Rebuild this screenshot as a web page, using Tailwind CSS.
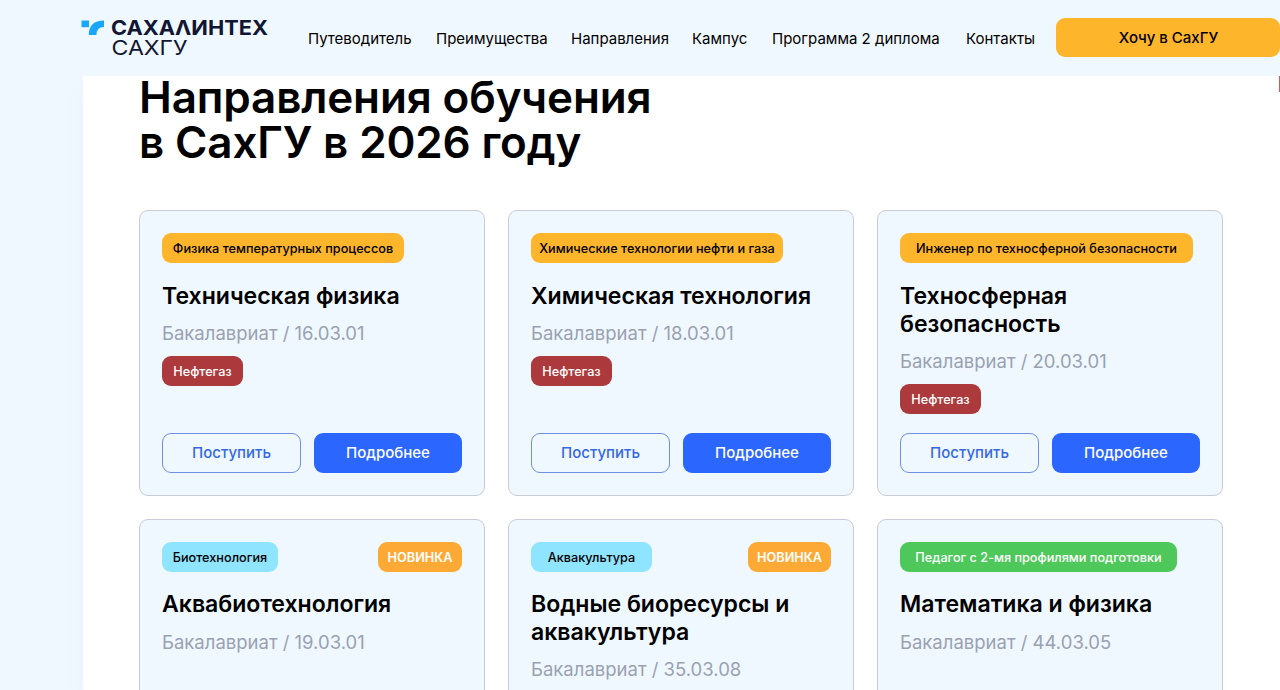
<!DOCTYPE html>
<html lang="ru">
<head>
<meta charset="utf-8">
<title>Сахалинтех СахГУ</title>
<script src="https://cdn.jsdelivr.net/npm/@tailwindcss/browser@4"></script>
</head>
<body class="relative h-[690px] overflow-hidden bg-[#f0f8ff] font-['Inter',sans-serif] text-black">
<header class="relative z-10 flex h-[76px] w-[1280px] bg-[#f0f8ff]">
  <a class="ml-[81px] mt-[16px] block w-[228px] shrink-0">
    <svg width="190" height="44" viewBox="0 -2 190 44">
      <path d="M.5 2.500h7.500v6.700H.500z" fill="#17a7fc"/>
      <path d="M23 2.500v6.500q-7.500 0-7.500 8H7.800Q7.800 2.500 23 2.500z" fill="#17a7fc"/>
      <text x="30" y="17" font-family="Inter" font-size="20.500" font-weight="700" fill="#101633" textLength="157" lengthAdjust="spacingAndGlyphs">САХАΛИНТЕХ</text>
      <text x="30.500" y="36.500" font-family="Inter" font-size="20" font-weight="400" fill="#101633" textLength="76" lengthAdjust="spacingAndGlyphs">САХГУ</text>
    </svg>
  </a>
  <nav class="flex w-[747px] shrink-0 pt-[27px] text-[15px] leading-6 whitespace-nowrap">
    <a class="-ml-px w-[128px]">Путеводитель</a>
    <a class="w-[135px]">Преимущества</a>
    <a class="w-[121px]">Направления</a>
    <a class="w-[80px]">Кампус</a>
    <a class="w-[194px]">Программа 2 диплома</a>
    <a>Контакты</a>
  </nav>
  <a class="mt-[18px] flex h-[39px] w-[224px] shrink-0 items-center justify-center rounded-[9px] bg-[#fdb52b] pt-px pl-px text-[15px] font-medium">Хочу в СахГУ</a>
</header>
<main class="ml-[83px] flow-root h-[614px] w-[1197px] bg-white pl-14 shadow-[0_8px_20px_rgba(0,90,180,0.04)]">
  <h1 class="flow-root h-[134px] text-[44px] leading-[44px] font-semibold tracking-[-0.14px] whitespace-nowrap"><span class="-mt-px block h-[45px]">Направления обучения</span><span class="block">в СахГУ в 2026 году</span></h1>
  <section class="grid w-[1085px] grid-cols-[346px_346px_346px] auto-rows-[286px] gap-[23px]">
    <article class="flex flex-col items-start rounded-[9px] border border-[#c9ccd8] bg-[#f0f8ff] p-[22px]">
      <span class="flex h-[30px] w-[242px] items-center justify-center rounded-[9px] bg-[#fdb52b] pt-px text-[12.7px] font-medium whitespace-nowrap">Физика температурных процессов</span>
      <h2 class="mt-[20px] text-[23.05px] leading-[27.700px] font-semibold">Техническая физика</h2>
      <p class="mt-[9px] text-[18.500px] leading-[27px] text-[#9aa1b2]">Бакалавриат / 16.03.01</p>
      <span class="mt-[9px] flex h-[30px] w-[81px] items-center justify-center rounded-[9px] bg-[#ac3a3c] pt-px text-[12.7px] font-medium text-white">Нефтегаз</span>
      <div class="mt-auto flex gap-[14px] text-[15px] font-medium">
        <a class="flex h-10 w-[139px] items-center justify-center rounded-[9px] border border-[#6f8fe6] pt-px text-[#3568e3]">Поступить</a>
        <a class="-ml-px flex h-10 w-[148px] items-center justify-center rounded-[9px] bg-[#2b66ff] pt-px text-white">Подробнее</a>
      </div>
    </article>
    <article class="flex flex-col items-start rounded-[9px] border border-[#c9ccd8] bg-[#f0f8ff] p-[22px]">
      <span class="flex h-[30px] w-[252px] items-center justify-center rounded-[9px] bg-[#fdb52b] pt-px text-[12.7px] font-medium whitespace-nowrap">Химические технологии нефти и газа</span>
      <h2 class="mt-[20px] text-[23.05px] leading-[27.700px] font-semibold">Химическая технология</h2>
      <p class="mt-[9px] text-[18.500px] leading-[27px] text-[#9aa1b2]">Бакалавриат / 18.03.01</p>
      <span class="mt-[9px] flex h-[30px] w-[81px] items-center justify-center rounded-[9px] bg-[#ac3a3c] pt-px text-[12.7px] font-medium text-white">Нефтегаз</span>
      <div class="mt-auto flex gap-[14px] text-[15px] font-medium">
        <a class="flex h-10 w-[139px] items-center justify-center rounded-[9px] border border-[#6f8fe6] pt-px text-[#3568e3]">Поступить</a>
        <a class="-ml-px flex h-10 w-[148px] items-center justify-center rounded-[9px] bg-[#2b66ff] pt-px text-white">Подробнее</a>
      </div>
    </article>
    <article class="flex flex-col items-start rounded-[9px] border border-[#c9ccd8] bg-[#f0f8ff] p-[22px]">
      <span class="flex h-[30px] w-[293px] items-center justify-center rounded-[9px] bg-[#fdb52b] pt-px text-[12.7px] font-medium whitespace-nowrap">Инженер по техносферной безопасности</span>
      <h2 class="mt-[20px] text-[23.05px] leading-[27.500px] font-semibold">Техносферная<br>безопасность</h2>
      <p class="mt-[10px] text-[18.500px] leading-[27px] text-[#9aa1b2]">Бакалавриат / 20.03.01</p>
      <span class="mt-[9px] flex h-[30px] w-[81px] items-center justify-center rounded-[9px] bg-[#ac3a3c] pt-px text-[12.7px] font-medium text-white">Нефтегаз</span>
      <div class="mt-auto flex gap-[14px] text-[15px] font-medium">
        <a class="flex h-10 w-[139px] items-center justify-center rounded-[9px] border border-[#6f8fe6] pt-px text-[#3568e3]">Поступить</a>
        <a class="-ml-px flex h-10 w-[148px] items-center justify-center rounded-[9px] bg-[#2b66ff] pt-px text-white">Подробнее</a>
      </div>
    </article>
    <article class="flex flex-col items-start rounded-[9px] border border-[#c9ccd8] bg-[#f0f8ff] p-[22px]">
      <div class="flex w-[300px] justify-between">
        <span class="flex h-[30px] w-[116px] items-center justify-center rounded-[9px] bg-[#8fe5ff] pt-px text-[12.7px] font-medium">Биотехнология</span>
        <span class="flex h-[30px] w-[84px] items-center justify-center rounded-[9px] bg-[#fcaa35] pt-px text-[12.7px] font-semibold text-white">НОВИНКА</span>
      </div>
      <h2 class="mt-[19px] text-[23.05px] leading-[27.700px] font-semibold">Аквабиотехнология</h2>
      <p class="mt-[10px] text-[18.500px] leading-[27px] text-[#9aa1b2]">Бакалавриат / 19.03.01</p>
    </article>
    <article class="flex flex-col items-start rounded-[9px] border border-[#c9ccd8] bg-[#f0f8ff] p-[22px]">
      <div class="flex w-[300px] justify-between">
        <span class="flex h-[30px] w-[121px] items-center justify-center rounded-[9px] bg-[#8fe5ff] pt-px text-[12.7px] font-medium">Аквакультура</span>
        <span class="flex h-[30px] w-[83px] items-center justify-center rounded-[9px] bg-[#fcaa35] pt-px text-[12.7px] font-semibold text-white">НОВИНКА</span>
      </div>
      <h2 class="mt-[19px] text-[23.05px] leading-[27.700px] font-semibold">Водные биоресурсы и<br>аквакультура</h2>
      <p class="mt-[10px] text-[18.500px] leading-[27px] text-[#9aa1b2]">Бакалавриат / 35.03.08</p>
    </article>
    <article class="flex flex-col items-start rounded-[9px] border border-[#c9ccd8] bg-[#f0f8ff] p-[22px]">
      <span class="flex h-[30px] w-[277px] items-center justify-center rounded-[9px] bg-[#4fc85b] pt-px text-[12.7px] font-medium whitespace-nowrap text-white">Педагог с 2-мя профилями подготовки</span>
      <h2 class="mt-[19px] text-[23.05px] leading-[27.700px] font-semibold">Математика и физика</h2>
      <p class="mt-[10px] text-[18.500px] leading-[27px] text-[#9aa1b2]">Бакалавриат / 44.03.05</p>
    </article>
  </section>
</main>
<div class="absolute top-[76px] right-0 z-10 h-[16px] w-px bg-[#e8504f]"></div>
</body>
</html>
